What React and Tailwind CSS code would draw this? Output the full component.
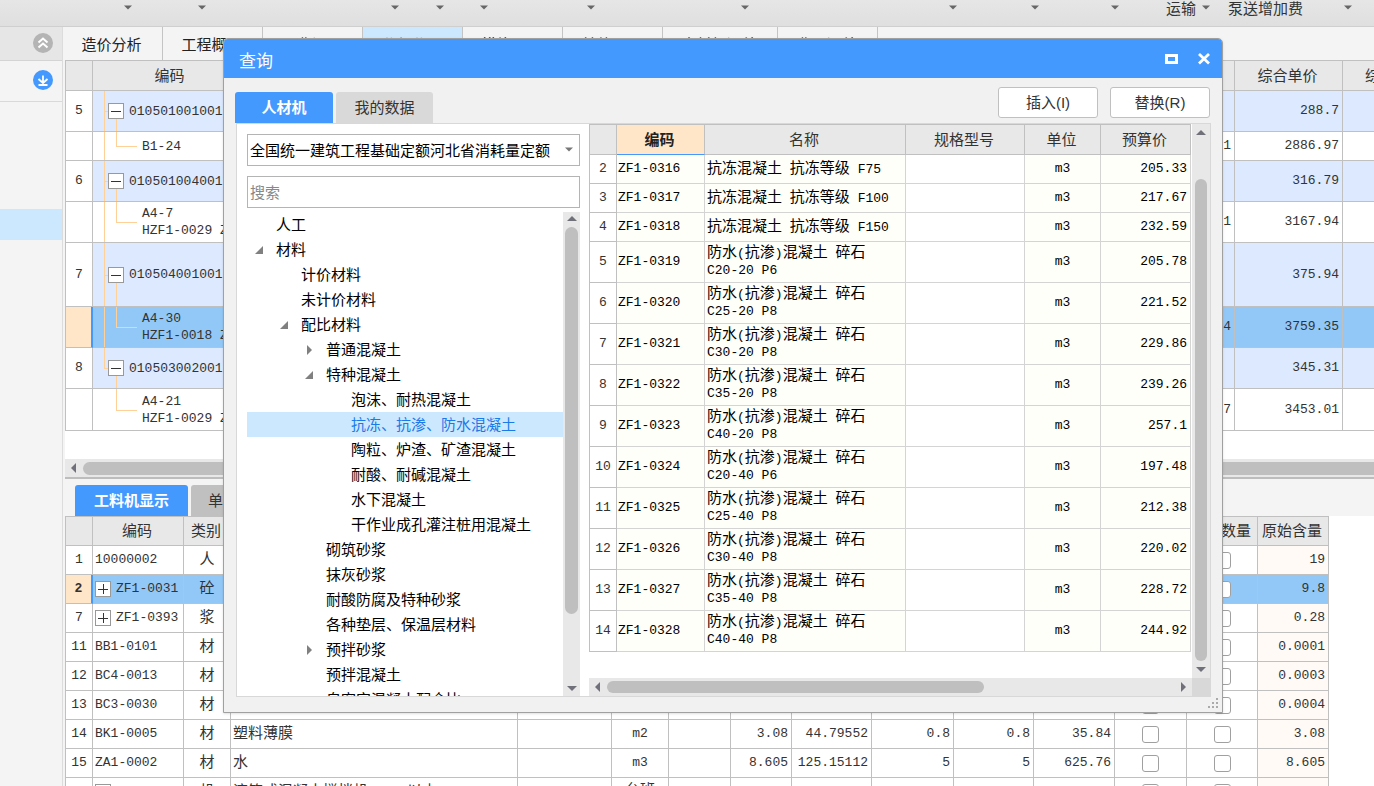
import React from "react";

const UI_FONT = "font-['Liberation_Sans','Noto_Sans_CJK_SC',sans-serif]";
const MONO = "font-['Liberation_Mono','Noto_Sans_CJK_SC',monospace] text-[13px]";

/* Chinese runs are drawn larger than the Latin and digit runs around them. */
function Mixed({ text }) {
  const runs = text.match(/[\u3000-\u9fff]+|[^\u3000-\u9fff]+/g) || [];
  return runs.map((run, i) =>
    /[\u3000-\u9fff]/.test(run) ? (
      <span key={i} className="text-[15px]">{run}</span>
    ) : (
      <span key={i} className="whitespace-pre">{run}</span>
    )
  );
}

function Lines({ text }) {
  return text.split("\n").map((line, i) => (
    <span key={i} className="block leading-[17px] whitespace-nowrap">
      <Mixed text={line} />
    </span>
  ));
}

function Arrow({ dir = "down", className = "" }) {
  const shapes = {
    down: "M0 2 H10 L5 7 Z",
    up: "M0 7 H10 L5 2 Z",
    left: "M7 0 V10 L2 5 Z",
    right: "M3 0 V10 L8 5 Z",
    open: "M9 1 V9 H1 Z",
  };
  return (
    <svg viewBox="0 0 10 10" aria-hidden="true" className={`shrink-0 ${className}`}>
      <path d={shapes[dir]} fill="currentColor" />
    </svg>
  );
}

const toolbar = [
  { w: "w-[132px]" }, { w: "w-[74px]" }, { w: "w-[193px]" }, { w: "w-[45px]" },
  { w: "w-[44px]" }, { w: "w-[107px]" }, { w: "w-[154px]" }, { w: "w-[208px]" },
  { w: "w-[82px]" }, { w: "w-[80px]" },
  { w: "ml-[47px] w-[44px]", label: "运输" },
  { w: "ml-[18px] w-[124px]", label: "泵送增加费" },
];

function Toolbar() {
  return (
    <header className="flex h-[27px] shrink-0 overflow-hidden border-b border-[#cfcfcf] bg-linear-to-b from-[#e6e6e6] to-[#dfdfdf]">
      {toolbar.map((t, i) => (
        <button
          key={i}
          aria-label={t.label || "菜单"}
          className={`flex h-[16px] shrink-0 items-center text-[15px] leading-[16px] whitespace-nowrap text-[#333] ${t.label ? "justify-between" : "justify-end"} ${t.w}`}
        >
          {t.label && <span className="pt-[2px]">{t.label}</span>}
          <Arrow className="size-[8px] text-[#666]" />
        </button>
      ))}
    </header>
  );
}

function SidePanel() {
  return (
    <aside className="flex w-[63px] shrink-0 flex-col border-r border-[#dcdcdc] bg-[#f4f4f4]">
      <div className="flex h-[34px] items-center justify-end border-b border-[#d4d4d4] bg-[#e6e6e6] pr-[9px] pb-[2px]">
        <button aria-label="收起">
          <svg viewBox="0 0 20 20" className="size-[20px]">
            <circle cx="10" cy="10" r="10" fill="#b4b4b4" />
            <path d="M5.5 9.5 L10 5.5 L14.5 9.5 M5.5 14.5 L10 10.5 L14.5 14.5" fill="none" stroke="#fff" strokeWidth="2" />
          </svg>
        </button>
      </div>
      <div className="flex h-[41px] items-center justify-end border-b border-[#d9d9d9] pr-[9px] pb-[2px]">
        <button aria-label="下载">
          <svg viewBox="0 0 20 20" className="size-[20px]">
            <circle cx="10" cy="10" r="10" fill="#4499ff" />
            <path d="M10 5.5 V13 M5.5 9 L10 13 L14.5 9 M5.5 15 H14.5" fill="none" stroke="#fff" strokeWidth="1.8" />
          </svg>
        </button>
      </div>
      <div className="mt-[107px] h-[31px] bg-[#cce8ff]" />
    </aside>
  );
}

const mainTabs = ["造价分析", "工程概况", "取费设置", "分部分项", "措施项目", "其他项目", "人材机汇总", "费用汇总"];

function MainTabs() {
  return (
    <nav className="flex h-[33px] shrink-0 bg-[#f4f4f4]">
      {mainTabs.map((t) => (
        <button
          key={t}
          className={`border-r border-[#c4c4c4] pt-[4px] pr-[2px] text-center text-[15px] whitespace-nowrap ${
            t === "分部分项" ? "bg-[#cce8ff] text-[#4499ff]" : "text-[#222]"
          } ${t.length === 4 ? "w-[100px]" : "w-[115px]"}`}
        >
          {t}
        </button>
      ))}
    </nav>
  );
}

const TH = "border-r border-b border-[#c0c0c0] bg-[#e8e8e8] pl-0 pr-[2px] pt-[4px] pb-0 text-center text-[15px] leading-[22px] font-normal whitespace-nowrap text-[#333]";
const TD = "border-r border-b border-[#c0c0c0]";

const billRows = [
  { n: "5", code: "010501001001", price: "288.7", h: "h-[41px]" },
  { child: true, code: "B1-24", qty: "1", price: "2886.97", h: "h-[29px]" },
  { n: "6", code: "010501004001", price: "316.79", h: "h-[41px]" },
  { child: true, code: "A4-7\nHZF1-0029 ZF1-0029", qty: "1", price: "3167.94", h: "h-[41px]" },
  { n: "7", code: "010504001001", price: "375.94", h: "h-[64px]" },
  { child: true, code: "A4-30\nHZF1-0018 ZF1-0018", qty: "4", price: "3759.35", h: "h-[41px]", selected: true },
  { n: "8", code: "010503002001", price: "345.31", h: "h-[41px]", last: true },
  { child: true, code: "A4-21\nHZF1-0029 ZF1-0029", qty: "7", price: "3453.01", h: "h-[42px]", last: true },
];

const GUIDE = "absolute bg-[#ffd199]";

function TreeGuides({ row }) {
  if (row.child) {
    return (
      <>
        {!row.last && <span className={`${GUIDE} top-0 -bottom-px left-[11px] w-px`} />}
        <span className={`${GUIDE} top-0 bottom-1/2 left-[23px] w-px`} />
        <span className={`${GUIDE} top-1/2 left-[23px] h-px w-[21px]`} />
      </>
    );
  }
  return (
    <>
      <span className={`${GUIDE} top-0 left-[11px] w-px ${row.last ? "bottom-1/2" : "-bottom-px"}`} />
      <span className={`${GUIDE} top-1/2 left-[11px] h-px w-[5px]`} />
      <span className={`${GUIDE} top-1/2 -bottom-px left-[23px] w-px`} />
    </>
  );
}

function Toggle({ open, className = "" }) {
  return (
    <button aria-label={open ? "折叠" : "展开"} className={`size-[16px] shrink-0 border border-[#999] bg-white text-[#333] ${className}`}>
      <svg viewBox="0 0 14 14" className="size-[14px]">
        <path d={open ? "M2 7 H12" : "M2 7 H12 M7 2 V12"} stroke="currentColor" strokeWidth="1" shapeRendering="crispEdges" />
      </svg>
    </button>
  );
}

function BillTable() {
  return (
    <div className="h-[399px] shrink-0 overflow-hidden bg-white">
      <table className={`w-[1485px] table-fixed border-separate border-spacing-0 border-t border-[#c0c0c0] text-[#333] ${MONO}`}>
        <colgroup>
          <col className="w-[28px]" />
          <col className="w-[156px]" />
          <col className="w-[560px]" />
          <col className="w-[266px]" />
          <col className="w-[60px]" />
          <col className="w-[100px]" />
          <col className="w-[108px]" />
          <col className="w-[107px]" />
          <col className="w-[100px]" />
        </colgroup>
        <thead>
          <tr className="h-[30px]">
            <th className={`${TH} border-l`} aria-label="序号" />
            {["编码", "名称", "项目特征", "单位", "工程量", "综合单价", "综合合价", "备注"].map((h) => (
              <th key={h} className={TH}>{h}</th>
            ))}
          </tr>
        </thead>
        <tbody>
          {billRows.map((r, i) => (
            <tr key={i} className={`${r.h} ${r.selected ? "bg-[#92c8f8]" : r.child ? "bg-white" : "bg-[#dce9ff]"}`}>
              <td className={`${TD} border-l text-center ${r.selected ? "border-r-2 border-r-[#4499ff] bg-[#ffe6c8]" : "bg-white"}`}>{r.n}</td>
              <td className={`${TD} relative overflow-hidden ${r.child ? "pl-[49px]" : "pl-[36px]"}`}>
                <TreeGuides row={r} />
                {!r.child && (
                  <span className="absolute inset-y-0 left-[15px] flex items-center">
                    <Toggle open />
                  </span>
                )}
                <Lines text={r.code} />
              </td>
              <td className={TD} /><td className={TD} /><td className={TD} />
              <td className={`${TD} pr-[3px] text-right`}>{r.qty}</td>
              <td className={`${TD} pr-[3px] text-right`}>{r.price}</td>
              <td className={TD} /><td className={TD} />
            </tr>
          ))}
        </tbody>
      </table>
    </div>
  );
}

const materials = [
  { n: "1", code: "10000002", kind: "人", raw: "19" },
  { n: "2", code: "ZF1-0031", kind: "砼", raw: "9.8", plus: true, selected: true },
  { n: "7", code: "ZF1-0393", kind: "浆", raw: "0.28", plus: true },
  { n: "11", code: "BB1-0101", kind: "材", raw: "0.0001" },
  { n: "12", code: "BC4-0013", kind: "材", raw: "0.0003" },
  { n: "13", code: "BC3-0030", kind: "材", raw: "0.0004" },
  { n: "14", code: "BK1-0005", kind: "材", name: "塑料薄膜", unit: "m2", vals: ["3.08", "44.79552", "0.8", "0.8", "35.84"], raw: "3.08" },
  { n: "15", code: "ZA1-0002", kind: "材", name: "水", unit: "m3", vals: ["8.605", "125.15112", "5", "5", "625.76"], raw: "8.605" },
  { n: "16", code: "00024070", kind: "机", name: "滚筒式混凝土搅拌机 500L以内", unit: "台班", vals: ["0.6", "8.7264", "151.1", "151.1", "1318.56"], raw: "0.6", plus: true },
];

function Check({ label }) {
  return (
    <input
      type="checkbox"
      aria-label={label}
      className="mx-auto block size-[17px] appearance-none rounded-[3px] border border-[#a0a0a0] bg-white"
    />
  );
}

function MaterialTable() {
  return (
    <div className="min-h-0 flex-1 overflow-hidden bg-white">
      <table className={`w-[1264px] table-fixed border-separate border-spacing-0 border-t border-[#c0c0c0] text-[#333] ${MONO}`}>
        <colgroup>
          <col className="w-[28px]" />
          <col className="w-[91px]" />
          <col className="w-[47px]" />
          <col className="w-[287px]" />
          <col className="w-[94px]" />
          <col className="w-[57px]" />
          <col className="w-[62px]" />
          <col className="w-[61px]" />
          <col className="w-[80px]" />
          <col className="w-[82px]" />
          <col className="w-[80px]" />
          <col className="w-[81px]" />
          <col className="w-[72px]" />
          <col className="w-[71px]" />
          <col className="w-[71px]" />
        </colgroup>
        <thead>
          <tr className="h-[29px]">
            <th className={`${TH} border-l`} aria-label="序号" />
            {["编码", "类别", "名称", "规格型号", "单位", "损耗", "含量", "数量", "预算价", "市场价", "合价", "暂估", "锁定数量", "原始含量"].map((h) => (
              <th key={h} className={TH}>{h}</th>
            ))}
          </tr>
        </thead>
        <tbody>
          {materials.map((m) => (
            <tr key={m.n} className={`h-[29px] ${m.selected ? "bg-[#92c8f8]" : "bg-white"}`}>
              <td className={`${TD} border-l py-0 text-center ${m.selected ? "border-r-2 border-r-[#4499ff] bg-[#ffe6c8] font-bold" : "bg-white"}`}>{m.n}</td>
              <td className={`${TD} py-0 pl-[2px]`}>
                <span className="flex items-center gap-[5px]">
                  {m.plus && <Toggle />}
                  {m.code}
                </span>
              </td>
              <td className={`${TD} pt-[3px] pb-0 text-center`}><Mixed text={m.kind} /></td>
              <td className={`${TD} overflow-hidden pt-[2px] pb-0 pl-[2px] whitespace-nowrap`}><Mixed text={m.name || ""} /></td>
              <td className={TD} />
              <td className={`${TD} py-0 text-center`}><Mixed text={m.unit || ""} /></td>
              <td className={TD} />
              {[0, 1, 2, 3, 4].map((i) => (
                <td key={i} className={`${TD} py-0 pr-[3px] text-right`}>{m.vals ? m.vals[i] : ""}</td>
              ))}
              <td className={`${TD} py-0`}><Check label={`暂估 ${m.code}`} /></td>
              <td className={`${TD} py-0`}><Check label={`锁定数量 ${m.code}`} /></td>
              <td className={`${TD} py-0 pr-[3px] text-right ${m.selected ? "" : "bg-[#fffaf5]"}`}>{m.raw}</td>
            </tr>
          ))}
        </tbody>
      </table>
    </div>
  );
}

const tree = [
  { d: 0, t: "人工" },
  { d: 0, t: "材料", a: "open" },
  { d: 1, t: "计价材料" },
  { d: 1, t: "未计价材料" },
  { d: 1, t: "配比材料", a: "open" },
  { d: 2, t: "普通混凝土", a: "right" },
  { d: 2, t: "特种混凝土", a: "open" },
  { d: 3, t: "泡沫、耐热混凝土" },
  { d: 3, t: "抗冻、抗渗、防水混凝土", selected: true },
  { d: 3, t: "陶粒、炉渣、矿渣混凝土" },
  { d: 3, t: "耐酸、耐碱混凝土" },
  { d: 3, t: "水下混凝土" },
  { d: 3, t: "干作业成孔灌注桩用混凝土" },
  { d: 2, t: "砌筑砂浆" },
  { d: 2, t: "抹灰砂浆" },
  { d: 2, t: "耐酸防腐及特种砂浆" },
  { d: 2, t: "各种垫层、保温层材料" },
  { d: 2, t: "预拌砂浆", a: "right" },
  { d: 2, t: "预拌混凝土" },
  { d: 2, t: "自密实混凝土配合比" },
];
const indent = ["pl-[7px]", "pl-[32px]", "pl-[57px]", "pl-[82px]"];

function CatalogPanel() {
  return (
    <div className="flex w-[352px] shrink-0 flex-col gap-[10px] pt-[10px] pr-[9px] pl-[10px]">
      <div className="relative">
        <select
          aria-label="定额库"
          className="h-[32px] w-full appearance-none border border-[#b4b4b4] bg-white pt-[2px] pl-[2px] text-[15px] text-black"
        >
          <option>全国统一建筑工程基础定额河北省消耗量定额</option>
        </select>
        <Arrow className="pointer-events-none absolute top-[12px] right-[7px] size-[8px] text-[#777]" />
      </div>
      <input
        aria-label="搜索"
        placeholder="搜索"
        className="h-[32px] w-full shrink-0 border border-[#b4b4b4] bg-white pl-[2px] text-[15px] placeholder:text-[#888]"
      />
      <div className="-mt-[6px] flex min-h-0 flex-1">
        <ul className="min-w-0 flex-1 overflow-hidden">
          {tree.map((n) => (
            <li
              key={n.t}
              className={`flex h-[25px] items-center text-[15px] whitespace-nowrap ${indent[n.d]} ${
                n.selected ? "bg-[#cce8ff] text-[#1a7ae8]" : "text-black"
              }`}
            >
              <span className="flex w-[22px] shrink-0">
                {n.a && <Arrow dir={n.a} className="size-[10px] text-[#808080]" />}
              </span>
              <span className="pt-[2px]">{n.t}</span>
            </li>
          ))}
        </ul>
        <div className="flex w-[17px] shrink-0 flex-col items-center justify-between bg-[#e8e8e8] py-[2px] text-[#70707a]">
          <Arrow dir="up" className="size-[10px]" />
          <div className="mt-[3px] mb-auto h-[387px] w-[13px] rounded-full bg-[#bfbfbf]" />
          <Arrow className="size-[10px]" />
        </div>
      </div>
    </div>
  );
}

const items = [
  ["2", "ZF1-0316", "抗冻混凝土 抗冻等级 F75", "205.33"],
  ["3", "ZF1-0317", "抗冻混凝土 抗冻等级 F100", "217.67"],
  ["4", "ZF1-0318", "抗冻混凝土 抗冻等级 F150", "232.59"],
  ["5", "ZF1-0319", "防水(抗渗)混凝土 碎石\nC20-20 P6", "205.78"],
  ["6", "ZF1-0320", "防水(抗渗)混凝土 碎石\nC25-20 P8", "221.52"],
  ["7", "ZF1-0321", "防水(抗渗)混凝土 碎石\nC30-20 P8", "229.86"],
  ["8", "ZF1-0322", "防水(抗渗)混凝土 碎石\nC35-20 P8", "239.26"],
  ["9", "ZF1-0323", "防水(抗渗)混凝土 碎石\nC40-20 P8", "257.1"],
  ["10", "ZF1-0324", "防水(抗渗)混凝土 碎石\nC20-40 P6", "197.48"],
  ["11", "ZF1-0325", "防水(抗渗)混凝土 碎石\nC25-40 P8", "212.38"],
  ["12", "ZF1-0326", "防水(抗渗)混凝土 碎石\nC30-40 P8", "220.02"],
  ["13", "ZF1-0327", "防水(抗渗)混凝土 碎石\nC35-40 P8", "228.72"],
  ["14", "ZF1-0328", "防水(抗渗)混凝土 碎石\nC40-40 P8", "244.92"],
];
const CELL = "border-r border-b border-[#d4d4d4] py-0";

function ItemGrid() {
  return (
    <div className="flex min-w-0 flex-1">
      <div className="flex min-w-0 flex-1 flex-col">
        <div className="min-h-0 flex-1 overflow-hidden bg-white">
          <table className={`w-[602px] table-fixed border-separate border-spacing-0 border-t border-[#c0c0c0] text-black ${MONO}`}>
            <colgroup>
              <col className="w-[28px]" />
              <col className="w-[88px]" />
              <col className="w-[201px]" />
              <col className="w-[119px]" />
              <col className="w-[76px]" />
              <col className="w-[90px]" />
            </colgroup>
            <thead>
              <tr className="h-[30px]">
                <th className={`${TH} border-l`} aria-label="序号" />
                <th className="border-r border-b border-r-[#c0c0c0] border-b-[#4499ff] bg-[#ffe6c8] pt-[4px] pr-[2px] pb-0 pl-0 text-[15px] leading-[22px] font-bold text-[#222]">编码</th>
                {["名称", "规格型号", "单位", "预算价"].map((h) => (
                  <th key={h} className={TH}>{h}</th>
                ))}
              </tr>
            </thead>
            <tbody>
              {items.map(([n, code, name, price]) => (
                <tr key={n} className={name.includes("\n") ? "h-[41px]" : "h-[29px]"}>
                  <td className={`${TD} border-l bg-white py-0 text-center text-[#333]`}>{n}</td>
                  <td className={`${CELL} bg-[#fffffa] pl-[1px]`}>{code}</td>
                  <td className={`${CELL} bg-[#fffffa] pl-[2px]`}><Lines text={name} /></td>
                  <td className={CELL} />
                  <td className={`${CELL} bg-[#fffffa] text-center`}>m3</td>
                  <td className={`${CELL} bg-[#fffffa] pr-[3px] text-right`}>{price}</td>
                </tr>
              ))}
            </tbody>
          </table>
        </div>
        <div className="flex h-[18px] items-center justify-between bg-[#e8e8e8] px-[4px] text-[#70707a]">
          <Arrow dir="left" className="size-[10px]" />
          <div className="mr-auto ml-[4px] h-[12px] w-[377px] rounded-full bg-[#bfbfbf]" />
          <Arrow dir="right" className="size-[10px]" />
        </div>
      </div>
      <div className="flex w-[18px] flex-col bg-[#e8e8e8] text-[#70707a]">
        <div className="flex flex-1 flex-col items-center pt-[4px] pb-[3px]">
          <Arrow dir="up" className="size-[10px]" />
          <div className="mt-[41px] mb-auto h-[482px] w-[12px] rounded-full bg-[#bfbfbf]" />
          <Arrow className="size-[10px]" />
        </div>
        <div className="h-[18px] bg-[#d8d8d8]" />
      </div>
    </div>
  );
}

function QueryDialog() {
  return (
    <section
      role="dialog"
      aria-label="查询"
      className="absolute top-[38px] left-[223px] flex h-[675px] w-[1000px] flex-col overflow-hidden rounded-t-[5px] border border-[#a0a0a0] bg-[#f1f1f1] shadow-sm"
    >
      <div className="flex h-[39px] shrink-0 items-center justify-between bg-[#4499ff] pr-[11px] pl-[15px] text-white">
        <h1 className="pt-[6px] text-[17px]">查询</h1>
        <div className="flex gap-[19px]">
          <button aria-label="最大化">
            <svg viewBox="0 0 14 12" className="h-[12px] w-[14px]">
              <path d="M1 1 H14 V11 H1 Z M4 4 V8 H11 V4 Z" fill="#fff" fillRule="evenodd" />
            </svg>
          </button>
          <button aria-label="关闭">
            <svg viewBox="0 0 14 12" className="h-[12px] w-[14px]">
              <path d="M2 1 L12 10.5 M12 1 L2 10.5" stroke="#fff" strokeWidth="2.8" />
            </svg>
          </button>
        </div>
      </div>
      <div className="flex h-[45px] shrink-0 items-end justify-between pr-[12px] pl-[11px]">
        <div className="flex gap-[3px]">
          <button className="h-[31px] w-[98px] rounded-t-[3px] bg-[#4499ff] pt-[2px] text-[15px] font-bold text-white">人材机</button>
          <button className="h-[31px] w-[97px] rounded-t-[3px] bg-[#d9d9d9] pt-[2px] text-[15px] text-[#333]">我的数据</button>
        </div>
        <div className="mb-[5px] flex gap-[12px]">
          {["插入(I)", "替换(R)"].map((b) => (
            <button key={b} className="h-[31px] w-[100px] rounded-[3px] border border-[#c0c0c0] bg-white pt-[2px] text-[15px] text-[#333]">
              {b}
            </button>
          ))}
        </div>
      </div>
      <div className="mr-[11px] mb-[15px] ml-[12px] flex min-h-0 flex-1 border border-[#d8d8d8] bg-white">
        <CatalogPanel />
        <ItemGrid />
      </div>
      <svg viewBox="0 0 12 12" className="absolute right-[3px] bottom-[3px] size-[12px]" fill="#aaa" aria-hidden="true">
        <path d="M9 1h2v2h-2z M5 5h2v2h-2z M9 5h2v2h-2z M1 9h2v2h-2z M5 9h2v2h-2z M9 9h2v2h-2z" />
      </svg>
    </section>
  );
}

export default function App() {
  return (
    <div className={`relative flex h-screen w-full flex-col overflow-hidden bg-[#f4f4f4] ${UI_FONT}`}>
      <Toolbar />
      <div className="flex min-h-0 flex-1">
        <SidePanel />
        <main className="flex min-w-0 flex-1 flex-col">
          <MainTabs />
          <div className="flex min-h-0 flex-1 flex-col pl-[2px]">
            <BillTable />
            <div className="flex h-[18px] shrink-0 items-center gap-[4px] bg-[#e8e8e8] pl-[4px] text-[#70707a]">
              <Arrow dir="left" className="size-[10px]" />
              <div className="h-[13px] flex-1 rounded-l-full bg-[#bfbfbf]" />
            </div>
            <div className="flex h-[39px] shrink-0 items-end gap-[3px] border-t-2 border-[#bdbdbd] pl-[10px]">
              <button className="h-[31px] w-[113px] rounded-t-[3px] bg-[#4499ff] pt-[2px] text-[15px] font-bold text-white">工料机显示</button>
              <button className="h-[31px] w-[98px] rounded-t-[3px] bg-[#c0c0c0] pt-[2px] pr-[4px] text-[15px] text-[#333]">单价构成</button>
            </div>
            <MaterialTable />
          </div>
        </main>
      </div>
      <QueryDialog />
    </div>
  );
}
